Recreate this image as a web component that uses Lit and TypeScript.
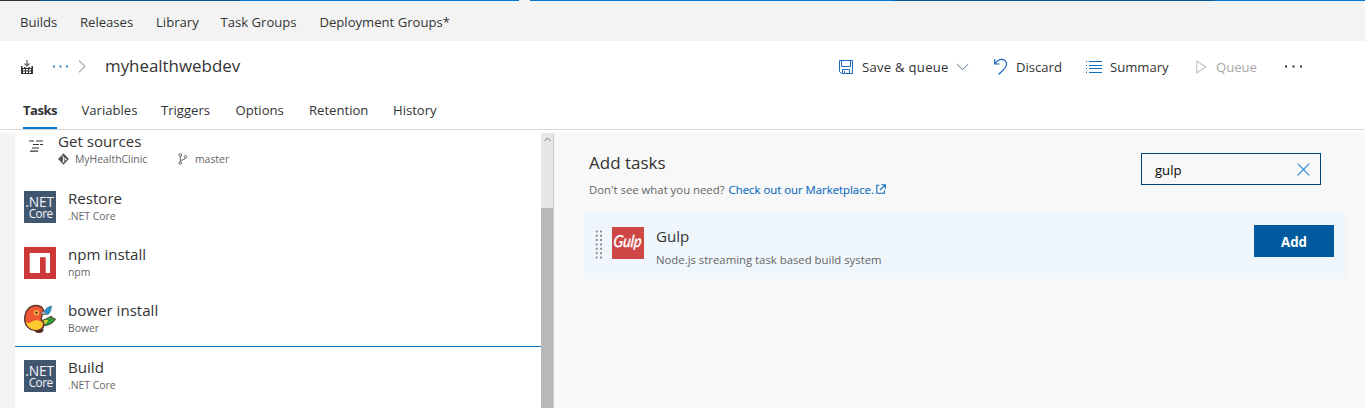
import { LitElement, html, css, svg } from "lit";
import { customElement } from "lit/decorators.js";

const base = css`
  :host { display: block; font-family: "Open Sans", "Noto Sans", sans-serif; color: #333; }
  * { box-sizing: border-box; }
  svg { display: block; flex: none; }
  .t { white-space: nowrap; }
`;

@customElement("build-header")
class BuildHeader extends LitElement {
  static styles = [base, css`
    .strip { height: 1px; display: grid; grid-template-columns: 40px 200px 279px 11px 364px 320px 1fr; }
    .gap { background: #f3f3f3; }
    .dark { background: #3a3336; }
    .navy { background: #005a9e; }
    .blue { background: #0078d7; }
    .hub { height: 40px; background: #f3f3f3; display: grid; grid-template-columns: 60px 76px 64.5px 99px auto; padding: 11px 0 0 20px; font-size: 13.1px; line-height: 20px; }
    .title { height: 51px; display: flex; align-items: center; padding-left: 20px; }
    .crumb { margin-left: 18px; }
    .chev { margin-left: 10px; }
    .name { font-size: 16.9px; margin: -2px 0 0 18px; line-height: 24px; width: 733px; }
    .cmds { display: grid; grid-template-columns: 156px 92px 110px 89px auto; font-size: 13.1px; line-height: 20px; padding-top: 1px; }
    .cmd { display: flex; align-items: center; gap: 8px; }
    .cmd svg { margin-top: -1px; }
    .wide { letter-spacing: .27px; margin: 0 -1px 0 1px; }
    .off { color: #a6a6a6; }
    .tabs { height: 38px; display: grid; grid-template-columns: 58.5px 79.5px 74.5px 73.5px 84px auto; justify-content: start; padding-left: 23px; border-bottom: 1px solid #d8d8d8; font-size: 13.1px; line-height: 20px; }
    .tab { height: 37px; padding-top: 8px; justify-self: start; }
    .on { font-weight: 700; letter-spacing: -.5px; width: 34px; border-bottom: 2px solid #0078d7; }
  `];
  render() {
    return html`
      <div class="strip"><i class="dark"></i><i class="navy"></i><i class="blue"></i><i class="gap"></i><i class="blue"></i><i class="navy"></i><i class="blue"></i></div>
      <nav class="hub">${["Builds", "Releases", "Library", "Task Groups", "Deployment Groups*"].map((x) => html`<span class="t">${x}</span>`)}</nav>
      <div class="title">
        <svg width="14" height="16" viewBox="0 0 14 16"><path d="M1 7h1.500v2H4V8h1.500v1h3V8H10v1h1.500V7H13v8H1z" fill="#333"/><path d="M7 1v6M4.500 4.500L7 7l2.500-2.500" fill="none" stroke="#77706a" stroke-width="1.400"/><path d="M3 10h2v1.500H3zM6 10h2v1.500H6zM9 10h2v1.500H9zM3 12.500h2V14H3zM6 12.500h2V14H6zM9 12.500h2V14H9z" fill="#fff"/></svg>
        <svg class="crumb" width="16" height="3" viewBox="0 0 16 3"><path d="M1 .5h2v2H1zM7.500 .5h2v2h-2zM14 .5h2v2h-2z" fill="#2b88d8"/></svg>
        <svg class="chev" width="9" height="13" viewBox="0 0 9 13"><path d="M1 .7l6 5.800-6 5.800" fill="none" stroke="#777"/></svg>
        <span class="name t">myhealthwebdev</span>
        <div class="cmds">
          <div class="cmd">
            <svg width="15" height="16" viewBox="0 0 15 16" fill="none" stroke="#1f68bd"><path d="M1.500 1.500h13v13h-11l-2-2zM3.500 1.500v6h9v-6M4.500 14.500v-4h7v4M6.500 12v2.500"/></svg>
            <span class="t wide">Save &amp; queue</span>
            <svg width="13" height="8" viewBox="0 0 13 8"><path d="M.8 1l5.700 5.700L12.200 1" fill="none" stroke="#56799f"/></svg>
          </div>
          <div class="cmd">
            <svg width="14" height="18" viewBox="0 0 14 18" fill="none" stroke="#1f68bd" stroke-width="1.200"><path d="M.7 1v5h5M.9 5.800C3 2.800 5.500 1.200 8 1.400c3 .3 4.800 2.500 4.500 5.300C12.200 10 8 13 4.500 16.500"/></svg>
            <span class="t">Discard</span>
          </div>
          <div class="cmd">
            <svg width="16" height="12" viewBox="0 0 16 12" stroke="#106ebe"><path d="M3 .5h13M3 4.500h13M3 7.500h13M3 11.500h13M0 .5h1M0 4.500h1M0 7.500h1M0 11.500h1"/></svg>
            <span class="t">Summary</span>
          </div>
          <div class="cmd off">
            <svg width="12" height="14" viewBox="0 0 12 14"><path d="M.8 1v12l9-6z" fill="none" stroke="#c4c4c4" stroke-width="1.100"/></svg>
            <span class="t">Queue</span>
          </div>
          <div class="cmd"><svg width="17" height="3" viewBox="0 0 17 3"><path d="M0 .5h2v2H0zM7.500 .5h2v2h-2zM15 .5h2v2h-2z" fill="#333"/></svg></div>
        </div>
      </div>
      <div class="tabs">${["Tasks", "Variables", "Triggers", "Options", "Retention", "History"].map((x, i) => html`<span class="tab t ${i ? "" : "on"}">${x}</span>`)}</div>
    `;
  }
}

const netCore = html`<svg width="32" height="32" viewBox="0 0 32 32"><path fill="#41566f" d="M0 0h32v32H0z"/><text fill="#f4f4f8" font-family="Open Sans, sans-serif"><tspan x="1.300" y="15.700" font-size="13.800" letter-spacing="-.2">.NET</tspan><tspan x="4.700" y="26.500" font-size="11.800" letter-spacing="-.5">Core</tspan></text></svg>`;
const npm = html`<svg width="32" height="32" viewBox="0 0 32 32"><path fill="#cb3837" d="M0 0h32v32H0z"/><path fill="#fff" d="M5.700 6H26v20h-4.300V10.300H16V26H5.700z"/></svg>`;
const bower = html`<svg width="32" height="32" viewBox="0 0 32 32">
  <path d="M10 26c0 2.500 2 4 5 4 2.500 0 4.500-1 4.500-4z" fill="#4f2d22"/>
  <path d="M16 17.500c6 0 9-4.500 12-4 .5 1-.5 1.700-.5 1.700 1.500-.2 3.500 0 4 1-2.500 4.500-8 6.800-14 6.300z" fill="#2f9e3d" stroke="#543729"/>
  <path d="M15 18.500c4-1 6-1.500 9-1.500 0 3-4 5-8.500 5z" fill="#d6d530"/>
  <path d="M.7 16C.7 8 5.500 2.500 12 2.500c4 0 6.500 2 7.700 5-.7 4-3 6.500-2.500 9.500 1.500 1 3 2.500 2.800 5-.3 3.500-4 5.500-7.800 5.500C5.500 27.500.7 23 .7 16z" fill="#ef5734" stroke="#543729" stroke-width="1.300"/>
  <path d="M2 19.500c3 1 5 0 7-1.500 3-1.500 6-.8 9 .7 2 4-.8 7.800-5.800 8.100C7 26.800 3.500 24 2 19.500z" fill="#ffcc2f"/>
  <path d="M16.500 9.500l4-1.800 3.500 3-5.500 1.200z" fill="#a8b0b4" stroke="#543729" stroke-width=".7"/>
  <path d="M20.500 8.500C21.500 5.500 24 4 27.500 3c-.3 3.500-1 7-4 9z" fill="#2494cf" stroke="#37637e" stroke-width=".6"/>
  <circle cx="12.500" cy="9.800" r="2.700" fill="#f7b53d"/><circle cx="12.500" cy="9.800" r="1.200" fill="#49301f"/>
</svg>`;

@customElement("task-list")
class TaskList extends LitElement {
  static styles = [base, css`
    :host { display: grid; grid-template-columns: 526px 12px 1px; height: 275px; background: #fff; overflow: hidden; }
    .sources { height: 49px; display: flex; padding-left: 14px; }
    .lines { margin-top: 7px; }
    .src { padding-left: 14px; }
    .src .h { line-height: 17px; }
    .h { font-size: 15.1px; line-height: 18px; }
    .meta { display: flex; align-items: center; font-size: 10.4px; line-height: 16px; color: #666; margin-top: 1px; }
    .repo { margin: 0 30px 0 6px; width: 73px; }
    .master { margin-left: 7px; }
    .row { height: 56px; display: flex; padding: 9px 0 0 9px; gap: 12px; }
    .bound { border-bottom: 1px solid #106ebe; height: 53px; }
    .last { padding-top: 13px; }
    .row .h { margin-top: -2px; }
    .s { font-size: 10.4px; line-height: 16px; color: #666; margin-top: 1px; }
    .bar { background: #e6e6e6; display: flex; flex-direction: column; }
    .arrow { height: 75px; padding: 4px 0 0 3px; }
    .thumb { flex: 1; background: #b8b8b8; }
    .edge { background: #ccc; }
  `];
  render() {
    const rows: [unknown, string, string, string][] = [
      [netCore, "Restore", ".NET Core", ""],
      [npm, "npm install", "npm", ""],
      [bower, "bower install", "Bower", "bound"],
      [netCore, "Build", ".NET Core", "last"],
    ];
    return html`
      <div>
        <div class="sources">
          <svg class="lines" width="15" height="12" viewBox="0 0 15 12"><path d="M0 1h5M7 1h7M4 4.500h6M11 4.500h3M3 8h7M1 11.200h8" stroke="#333" stroke-width="1.200"/></svg>
          <div class="src">
            <div class="h t">Get sources</div>
            <div class="meta">
              <svg width="11" height="12" viewBox="0 0 11 12"><path d="M5.500 .3L11 6l-5.500 5.700L0 6z" fill="#555"/><path d="M4 2.500l1.500 1.700v4.500M5.500 4.500l2 2" stroke="#fff" stroke-width=".9" fill="none"/><circle cx="5.500" cy="8.500" r="1" fill="#fff"/><circle cx="7.700" cy="6.500" r=".9" fill="#fff"/></svg>
              <span class="repo t">MyHealthClinic</span>
              <svg width="10" height="12" viewBox="0 0 10 12" fill="none" stroke="#666"><circle cx="2.300" cy="2" r="1.300"/><circle cx="2.300" cy="10" r="1.300"/><circle cx="7.500" cy="3.800" r="1.300"/><path d="M2.300 3.300v5.400M7.500 5.100c0 2-5 1.400-5.200 3.200"/></svg>
              <span class="master t">master</span>
            </div>
          </div>
        </div>
        ${rows.map(([icon, name, sub, cls]) => html`<div class="row ${cls}">${icon}<div><div class="h t">${name}</div><div class="s t">${sub}</div></div></div>`)}
      </div>
      <div class="bar"><div class="arrow"><svg width="7" height="5" viewBox="0 0 7 5"><path d="M.5 4l3-3 3 3" fill="none" stroke="#777"/></svg></div><div class="thumb"></div></div>
      <div class="edge"></div>
    `;
  }
}

@customElement("add-tasks")
class AddTasks extends LitElement {
  static styles = [base, css`
    :host { padding: 20px 19px 0 30px; background: #f8f8f8; }
    .top { display: flex; justify-content: space-between; height: 60px; padding: 0 25px 0 5px; }
    h2 { margin: -2px 0 0; font-size: 17px; font-weight: 400; line-height: 24px; }
    .hint { display: flex; align-items: center; font-size: 11.35px; line-height: 18px; color: #666; margin-top: 6px; }
    .link { color: #106ebe; margin: 0 2px 0 4px; -webkit-text-stroke: .15px #106ebe; }
    .hint svg { margin-top: -2px; }
    .search { width: 180px; height: 32px; border: 1px solid #004578; display: flex; align-items: center; justify-content: space-between; padding: 0 10px 0 13px; }
    input { all: unset; width: 100px; font-size: 13.1px; line-height: 20px; color: #000; padding-top: 2px; }
    .item { height: 66px; background: #eff6fc; display: flex; padding: 12px 12px 0 11px; }
    .grip { margin-top: 5px; }
    .logo { margin: 2px 12px 0 9px; }
    .info { flex: 1; }
    .n { font-size: 15.1px; line-height: 22px; }
    .d { font-size: 11.35px; line-height: 18px; color: #666; margin-top: 4px; }
    .add { width: 80px; height: 32px; background: #005a9e; color: #fff; border: 0; font: 700 13.3px/32px "Open Sans", sans-serif; padding: 1px 0 0; text-align: center; }
  `];
  render() {
    return html`
      <div class="top">
        <div>
          <h2 class="t">Add tasks</h2>
          <div class="hint"><span class="t">Don't see what you need?</span><span class="link t">Check out our Marketplace.</span>
            <svg width="10" height="10" viewBox="0 0 10 10" fill="none" stroke="#106ebe" stroke-width="1.100"><path d="M3.500 1.200H.8v8h7.700V6.500M5.300 .8h4v4M9.200 .8L4 6"/></svg>
          </div>
        </div>
        <div class="search"><input value="gulp" aria-label="Search"><svg width="13" height="13" viewBox="0 0 13 13"><path d="M.7 .7l11.600 11.600M12.300 .7L.7 12.300" stroke="#2b88d8" stroke-width="1.200"/></svg></div>
      </div>
      <div class="item">
        <svg class="grip" width="8" height="30" viewBox="0 0 8 30">${[0, 1, 2, 3, 4, 5, 6].map((i) => svg`<path d="M.7 ${i * 4.35 + 0.4}h2v2h-2zM5 ${i * 4.35 + 0.4}h2v2h-2z" fill="#8e9296"/>`)}</svg>
        <svg class="logo" width="32" height="32" viewBox="0 0 32 32"><path fill="#cf4646" d="M0 0h32v32H0z"/><text x="3.200" y="20.500" font-family="Lato, sans-serif" font-size="16.500" font-style="italic" fill="#fff" stroke="#fff" stroke-width=".4" textLength="28" lengthAdjust="spacingAndGlyphs" transform="skewX(-6)">Gulp</text></svg>
        <div class="info"><div class="n t">Gulp</div><div class="d t">Node.js streaming task based build system</div></div>
        <button class="add">Add</button>
      </div>
    `;
  }
}

@customElement("app-root")
class AppRoot extends LitElement {
  static styles = [base, css`
    :host { height: 408px; background: #fff; overflow: hidden; }
    .body { display: grid; grid-template-columns: 15px 539px 1fr; height: 275px; margin-top: 3px; }
    .rail { background: #f3f3f3; }
  `];
  render() {
    return html`<build-header></build-header><div class="body"><div class="rail"></div><task-list></task-list><add-tasks></add-tasks></div>`;
  }
}
